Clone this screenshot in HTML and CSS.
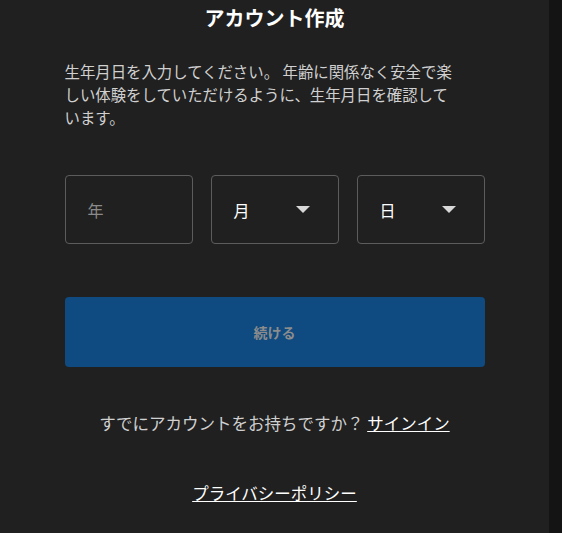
FILE: index.html
```html
<!DOCTYPE html>
<html lang="ja">

<head>
    <meta charset="UTF-8">
    <title>アカウント作成</title>
    <link rel="stylesheet" href="styles.css">
</head>

<body>
    <div class="page">
        <div class="panel">
            <h1 class="title">アカウント作成</h1>

            <!-- Intro text -->
            <p class="intro">生年月日を入力してください。 年齢に関係なく安全で楽しい体験をしていただけるように、生年月日を確認しています。</p>

            <!-- Birthday fields -->
            <div class="dob">
                <div class="field">
                    <span class="placeholder">年</span>
                </div>
                <div class="field">
                    <span class="value">月</span>
                    <span class="caret"></span>
                </div>
                <div class="field">
                    <span class="value">日</span>
                    <span class="caret"></span>
                </div>
            </div>

            <!-- Continue button -->
            <button class="cta" disabled>続ける</button>

            <p class="signin">すでにアカウントをお持ちですか？ <a href="#">サインイン</a></p>

            <p class="privacy"><a href="#">プライバシーポリシー</a></p>
        </div>
        <div class="edge"></div>
    </div>
</body>

</html>
```

FILE: styles.css
```css
html,
body {
    margin: 0;
    height: 100%;
}

body {
    font-family: "Noto Sans CJK JP", "Noto Sans", sans-serif;
    background-color: #202020;
    color: #fff;
}

.page {
    display: flex;
    height: 100%;
}

.panel {
    width: 549px;
    display: flex;
    flex-direction: column;
    align-items: center;
}

.edge {
    flex: 1;
    background-color: #141414;
}

.title {
    margin: 5px 0 0;
    font-size: 20px;
    font-weight: bold;
    line-height: 26px;
}

.intro {
    width: 420px;
    box-sizing: border-box;
    padding-right: 26px;
    margin: 29px 0 0;
    font-size: 15.4px;
    line-height: 23px;
    color: #d0d0d0;
}

.dob {
    width: 420px;
    display: flex;
    gap: 18px;
    margin-top: 46px;
}

.field {
    flex: 1;
    height: 69px;
    box-sizing: border-box;
    border: 1px solid #5c5c5c;
    border-radius: 4px;
    display: flex;
    align-items: center;
    justify-content: space-between;
    padding: 0 28px 0 22px;
    font-size: 16px;
}

.field .placeholder {
    color: #8a8a8a;
}

.field .value {
    color: #fff;
}

.caret {
    width: 0;
    height: 0;
    border-left: 7px solid transparent;
    border-right: 7px solid transparent;
    border-top: 7px solid #d8d8d8;
}

.cta {
    width: 420px;
    height: 70px;
    margin-top: 53px;
    border: none;
    border-radius: 4px;
    background-color: #0f4a80;
    color: #8c8c8c;
    font-family: inherit;
    font-size: 14px;
    font-weight: bold;
}

.signin {
    margin: 44px 0 0;
    font-size: 16.5px;
    line-height: 24px;
    color: #d0d0d0;
}

.signin a,
.privacy a {
    color: #fff;
    text-decoration: underline;
}

.privacy {
    margin: 46px 0 0;
    font-size: 16.5px;
    line-height: 24px;
}
```
